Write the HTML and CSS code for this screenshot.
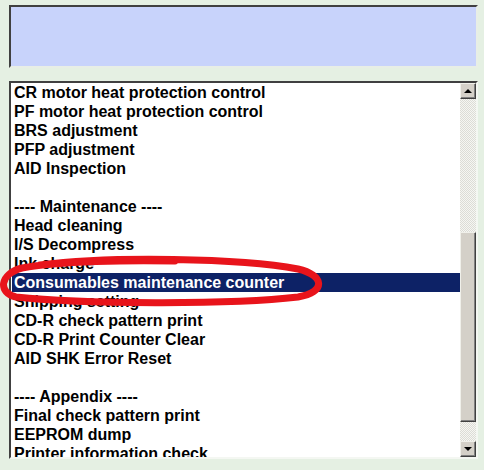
FILE: index.html
```html
<!DOCTYPE html>
<html lang="en">
<head>
    <meta charset="UTF-8">
    <meta name="viewport" content="width=device-width, initial-scale=1.0">
    <title>Adjustment Program</title>
    <link rel="stylesheet" href="styles.css">
</head>
<body>
    <div class="page">
        <div class="preview"></div>

        <div class="listbox">
            <ul class="items">
                <li>CR motor heat protection control</li>
                <li>PF motor heat protection control</li>
                <li>BRS adjustment</li>
                <li>PFP adjustment</li>
                <li>AID Inspection</li>
                <li>&nbsp;</li>
                <li>---- Maintenance ----</li>
                <li>Head cleaning</li>
                <li>I/S Decompress</li>
                <li>Ink charge</li>
                <li class="selected">Consumables maintenance counter</li>
                <li>Shipping setting</li>
                <li>CD-R check pattern print</li>
                <li>CD-R Print Counter Clear</li>
                <li>AID SHK Error Reset</li>
                <li>&nbsp;</li>
                <li>---- Appendix ----</li>
                <li>Final check pattern print</li>
                <li>EEPROM dump</li>
                <li>Printer information check</li>
            </ul>
            <div class="scrollbar">
                <div class="sb-btn"><span class="arrow up"></span></div>
                <div class="sb-track top-track"></div>
                <div class="sb-thumb"></div>
                <div class="sb-track"></div>
                <div class="sb-btn"><span class="arrow down"></span></div>
            </div>
        </div>
    </div>

    <!-- marker circled around the selected row -->
    <svg class="marker" width="484" height="470" viewBox="0 0 484 470">
        <path d="M 40 265 C 110 256, 240 258, 298 269 C 324 275, 327 292, 298 297 C 230 305, 80 304, 16 297 C -2 293, -1 274, 22 268 C 60 261, 130 260, 175 261"
              fill="none" stroke="#e8141b" stroke-width="7" stroke-linecap="round" stroke-linejoin="round"/>
    </svg>
</body>
</html>
```

FILE: styles.css
```css
body {
    margin: 0;
    background: #e5f0e3;
    font-family: 'Liberation Sans', Arial, sans-serif;
}

.page {
    display: flex;
    flex-direction: column;
    gap: 13px;
    padding: 5px 6px 0 9px;
}

.preview {
    height: 59px;
    background: #c8d3fb;
    border: 2px solid;
    border-color: #404040 #e8eee6 #e8eee6 #404040;
}

.listbox {
    display: flex;
    height: 374px;
    background: #fff;
    border: 2px solid;
    border-color: #404040 #f4f7f2 #f4f7f2 #404040;
    overflow: hidden;
}

.items {
    flex: 1;
    list-style: none;
    margin: 0;
    padding: 0 0 0 1px;
    overflow: hidden;
}

.items li {
    height: 19px;
    line-height: 19px;
    padding-left: 2px;
    font-size: 16px;
    font-weight: bold;
    color: #000;
    white-space: nowrap;
}

.items li.selected {
    background: #0d2266;
    color: #fff;
}

/* classic 3D scrollbar */
.scrollbar {
    width: 16px;
    display: flex;
    flex-direction: column;
}

.sb-btn,
.sb-thumb {
    box-sizing: border-box;
    background: #d4d0c8;
    border: 1px solid;
    border-color: #f0f0ea #404040 #404040 #f0f0ea;
    box-shadow: inset -1px -1px 0 #808080;
}

.sb-btn {
    height: 16px;
    display: flex;
    align-items: center;
    justify-content: center;
}

.sb-track {
    flex: 1;
    background-color: #f4f4f0;
    background-image: repeating-conic-gradient(#dcdcd6 0 25%, #f6f6f2 0 50%);
    background-size: 2px 2px;
}

.top-track {
    flex: 0 0 133px;
}

.sb-thumb {
    height: 190px;
}

.arrow {
    width: 0;
    height: 0;
    border-left: 4px solid transparent;
    border-right: 4px solid transparent;
}

.arrow.up {
    border-bottom: 4px solid #000;
}

.arrow.down {
    border-top: 4px solid #000;
}

.marker {
    position: absolute;
    top: 0;
    left: 0;
    pointer-events: none;
}
```
